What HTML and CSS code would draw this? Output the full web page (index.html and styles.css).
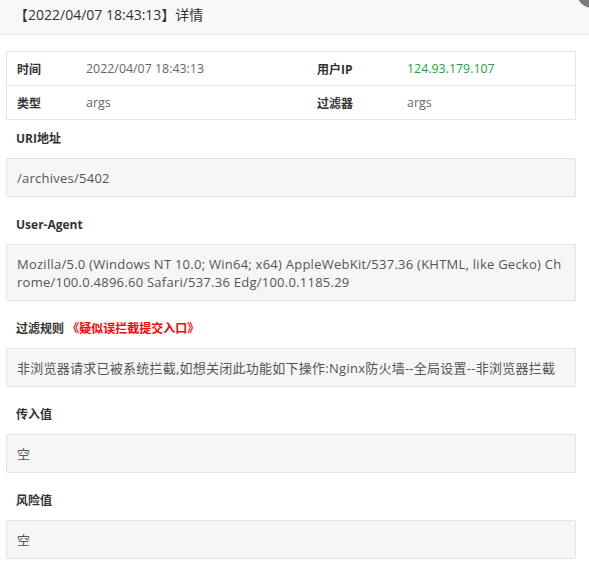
FILE: index.html
```html
<!DOCTYPE html>
<html lang="zh-CN">
<head>
<meta charset="UTF-8">
<title>详情</title>
<link rel="stylesheet" href="styles.css">
</head>
<body>
<div class="layer">
  <div class="layer-title">【2022/04/07 18:43:13】详情</div>
  <span class="layer-close"></span>
  <div class="layer-content">
    <table class="info-table">
      <tr>
        <th class="col1">时间</th>
        <td class="col2">2022/04/07 18:43:13</td>
        <th class="col3">用户IP</th>
        <td class="col4 ip">124.93.179.107</td>
      </tr>
      <tr>
        <th>类型</th>
        <td>args</td>
        <th>过滤器</th>
        <td>args</td>
      </tr>
    </table>

    <div class="field-label">URI地址</div>
    <div class="field-box">/archives/5402</div>

    <div class="field-label">User-Agent</div>
    <div class="field-box">Mozilla/5.0 (Windows NT 10.0; Win64; x64) AppleWebKit/537.36 (KHTML, like Gecko) Chrome/100.0.4896.60 Safari/537.36 Edg/100.0.1185.29</div>

    <div class="field-label">过滤规则 <a class="red-link" href="#">《疑似误拦截提交入口》</a></div>
    <div class="field-box">非浏览器请求已被系统拦截,如想关闭此功能如下操作:Nginx防火墙--全局设置--非浏览器拦截</div>

    <div class="field-label">传入值</div>
    <div class="field-box">空</div>

    <div class="field-label">风险值</div>
    <div class="field-box">空</div>
  </div>
</div>
</body>
</html>
```

FILE: styles.css
```css
body {
  margin: 0;
  font-family: "Open Sans", "Noto Sans CJK SC", sans-serif;
  font-size: 14px;
  color: #333;
  background-color: #fff;
  overflow: hidden;
}
.layer {
  position: relative;
  width: 589px;
}
.layer-title {
  height: 35px;
  line-height: 30px;
  padding-left: 14px;
  box-sizing: border-box;
  background-color: #f8f8f8;
  border-bottom: 1px solid #eee;
  color: #333;
}
/* round close button, mostly outside the window */
.layer-close {
  position: absolute;
  right: -18px;
  top: -22px;
  width: 30px;
  height: 30px;
  border-radius: 50%;
  background-color: #787878;
}
.layer-content {
  padding: 16px 13px 0 6px;
}
.info-table {
  width: 570px;
  border-collapse: collapse;
  border: 1px solid #e6e6e6;
  table-layout: fixed;
}
.info-table th,
.info-table td {
  height: 33px;
  padding: 0 10px;
  text-align: left;
  border-bottom: 1px solid #e6e6e6;
}
.info-table th {
  font-size: 12px;
  font-weight: bold;
  color: #333;
}
.info-table td {
  font-size: 12.4px;
  color: #666;
}
.col1 { width: 49px; }
.col2 { width: 211px; }
.col3 { width: 70px; }
.info-table td.ip {
  color: #20a53a;
}
.field-label {
  padding-left: 10px;
  margin: 18px 0 9px;
  font-size: 12px;
  font-weight: bold;
  line-height: 20px;
}
.info-table + .field-label {
  margin-top: 9px;
}
.red-link {
  color: #f00;
  text-decoration: none;
}
.field-box {
  padding: 10px 10px 9px;
  font-size: 13px;
  letter-spacing: 0.25px;
  line-height: 18px;
  background-color: #f6f6f6;
  border: 1px solid #e3e3e3;
  border-radius: 2px;
  color: #555;
  word-break: break-all;
}
```
